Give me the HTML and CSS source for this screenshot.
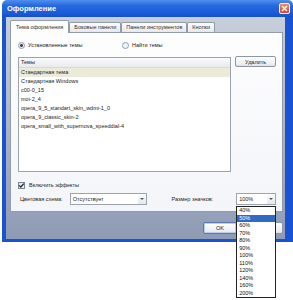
FILE: index.html
```html
<!DOCTYPE html>
<html>
  <head>
    <meta charset="UTF-8">
    <title>Оформление</title>
    <link rel="stylesheet" href="styles.css">
  </head>
  <body>
    <div class="window">
      <div class="title-bar">
        <div class="title">Оформление</div>
        <div class="close-btn">
          <svg width="7" height="7" viewBox="0 0 7 7"><path d="M1 1L6 6M6 1L1 6" stroke="white" stroke-width="1.4"/></svg>
        </div>
      </div>

      <div class="window-body">
        <div class="tabs">
          <div class="tab active">Тема оформления</div>
          <div class="tab">Боковые панели</div>
          <div class="tab">Панели инструментов</div>
          <div class="tab">Кнопки</div>
        </div>

        <div class="panel">
          <div class="radios">
            <div class="radio installed checked"><span class="dot"></span>Установленные темы</div>
            <div class="radio"><span class="dot"></span>Найти темы</div>
          </div>

          <div class="themes-row">
            <div class="list">
              <div class="list-head">Темы</div>
              <div class="item selected">Стандартная тема</div>
              <div class="item">Стандартная Windows</div>
              <div class="item">c00-0_15</div>
              <div class="item">moi-2_4</div>
              <div class="item">opera_9_5_standart_skin_wdmi-1_0</div>
              <div class="item">opera_9_classic_skin-2</div>
              <div class="item">opera_small_with_supernova_speeddial-4</div>
            </div>
            <button class="button delete">Удалить</button>
          </div>

          <div class="check">
            <span class="box">
              <svg width="7" height="7" viewBox="0 0 7 7"><path d="M1.2 3.4L2.8 5L5.8 1.6" stroke="#222" stroke-width="1.2" fill="none"/></svg>
            </span>
            Включить эффекты
          </div>

          <div class="options">
            <span class="label scheme-label">Цветовая схема:</span>
            <div class="select scheme">
              <span class="value">Отсутствует</span>
              <span class="arrow"></span>
            </div>
            <span class="label size-label">Размер значков:</span>
            <div class="select size">
              <span class="value">100%</span>
              <span class="arrow"></span>
              <!-- open list of the combo box -->
              <div class="dropdown">
                <div class="option">40%</div>
                <div class="option current">50%</div>
                <div class="option">60%</div>
                <div class="option">70%</div>
                <div class="option">80%</div>
                <div class="option">90%</div>
                <div class="option">100%</div>
                <div class="option">110%</div>
                <div class="option">120%</div>
                <div class="option">140%</div>
                <div class="option">160%</div>
                <div class="option">200%</div>
              </div>
            </div>
          </div>
        </div>

        <div class="footer">
          <button class="button ok">OK</button>
          <button class="button cancel">Отмена</button>
        </div>
      </div>
    </div>
  </body>
</html>
```

FILE: styles.css
```css
html {
  min-height: 300px;
}

body {
  margin: 0;
  min-height: 300px;
  background-color: white;
  font-family: 'Liberation Sans', sans-serif;
  font-size: 5.5px;
  color: #222;
}

.window {
  width: 291px;
  margin-left: 2px;
}

.title-bar {
  height: 17px;
  box-sizing: border-box;
  display: flex;
  align-items: center;
  justify-content: space-between;
  padding: 0 3px 0 5px;
  border-radius: 5px 5px 0 0;
  background: linear-gradient(#4f8fee, #2467de 35%, #1a5cd8 80%, #1450c4);
}

.title {
  color: white;
  font-weight: bold;
  font-size: 7.5px;
}

.close-btn {
  width: 11px;
  height: 11px;
  box-sizing: border-box;
  border: 1px solid #f4f4f4;
  border-radius: 2px;
  background: linear-gradient(#f08a62, #d8452a);
  display: flex;
  align-items: center;
  justify-content: center;
}

.window-body {
  height: 225px;
  box-sizing: border-box;
  border-style: solid;
  border-color: #1a52d4;
  border-width: 0 8px 3px 4px;
  padding: 3px 2px 0 4px;
  background: linear-gradient(#c8cfdb, #8e9bb3);
}

.tabs {
  display: flex;
  height: 12px;
  align-items: flex-end;
}

.tab {
  height: 10px;
  box-sizing: border-box;
  padding: 0 4px;
  line-height: 9px;
  border: 1px solid #939ba6;
  border-bottom: none;
  border-radius: 2px 2px 0 0;
  background: linear-gradient(#fdfdfd, #e6e8ee);
  color: #333;
  white-space: nowrap;
}

.tab.active {
  height: 13px;
  margin-bottom: -1px;
  line-height: 12px;
  padding: 0 5px;
  background: #fcfcfd;
  position: relative;
  z-index: 1;
}

.panel {
  height: 180px;
  width: 273px;
  box-sizing: border-box;
  border: 1px solid #939ba6;
  background: linear-gradient(#fdfdfe, #f4f5f8);
  padding: 8px 6px 0 7px;
}

.radios {
  display: flex;
  height: 8px;
  align-items: center;
}

.radio {
  display: flex;
  align-items: center;
  gap: 3px;
}

.radio.installed {
  width: 104px;
}

.dot {
  width: 7px;
  height: 7px;
  box-sizing: border-box;
  border: 1px solid #8c9cb4;
  border-radius: 50%;
  background: #f2f3f5;
}

.radio.checked .dot {
  background: radial-gradient(#3e3e3e 35%, #f2f3f5 45%);
}

.themes-row {
  display: flex;
  align-items: flex-start;
  margin-top: 7px;
}

.list {
  width: 214px;
  height: 115px;
  margin-top: 1px;
  box-sizing: border-box;
  border: 1px solid #9aa3ae;
  background: white;
}

.list-head {
  height: 9px;
  line-height: 9px;
  padding-left: 2px;
  border-bottom: 1px solid #d6d9df;
  background: linear-gradient(#fbfbfc, #e8eaee);
}

.item {
  height: 9px;
  line-height: 9px;
  padding-left: 2px;
  white-space: nowrap;
}

.item.selected {
  background-color: #ecead9;
}

.button {
  font-family: 'Liberation Sans', sans-serif;
  font-size: 5.5px;
  color: #222;
  padding: 0;
  height: 11px;
  box-sizing: border-box;
  border: 1px solid #8d97a6;
  border-radius: 2px;
  background: linear-gradient(#ffffff, #eceef2 80%, #dcdfe5);
}

.delete {
  width: 41px;
  margin-left: 4px;
}

.check {
  display: flex;
  align-items: center;
  gap: 4px;
  height: 8px;
  margin-top: 9px;
}

.box {
  width: 7px;
  height: 7px;
  box-sizing: border-box;
  border: 1px solid #7a8596;
  background: #e8e9ec;
  display: flex;
  align-items: center;
  justify-content: center;
}

.box svg {
  flex: none;
}

.options {
  display: flex;
  align-items: center;
  height: 12px;
  margin-top: 4px;
  padding-left: 2px;
}

.label {
  white-space: nowrap;
}

.scheme-label {
  width: 50px;
}

.size-label {
  width: 65px;
  margin-left: 24px;
}

.select {
  height: 12px;
  box-sizing: border-box;
  border: 1px solid #9aa3ae;
  background: white;
  display: flex;
  align-items: center;
  position: relative;
}

.select .value {
  flex: 1;
  padding-left: 2px;
}

.scheme {
  width: 78px;
}

.size {
  width: 40px;
}

.arrow {
  width: 8px;
  height: 10px;
  background: linear-gradient(#fafbfc, #e4e7ec);
  display: flex;
  align-items: center;
  justify-content: center;
}

.arrow::after {
  content: "";
  border-left: 2px solid transparent;
  border-right: 2px solid transparent;
  border-top: 2px solid #4d5560;
}

.dropdown {
  position: absolute;
  top: 12px;
  left: -1px;
  width: 40px;
  height: 92px;
  box-sizing: border-box;
  border: 1px solid #222;
  background: white;
  z-index: 5;
}

.option {
  height: 7.5px;
  line-height: 7.5px;
  padding-left: 2px;
  color: #111;
}

.option.current {
  background-color: #316ac5;
  color: white;
}

.footer {
  display: flex;
  justify-content: flex-end;
  gap: 4px;
  padding-top: 10px;
  width: 273px;
}

.ok {
  width: 34px;
  height: 12px;
  border-color: #5c78b0;
  box-shadow: inset 0 0 0 1px #b9cdf0;
}

.cancel {
  width: 42px;
  height: 12px;
}
```
